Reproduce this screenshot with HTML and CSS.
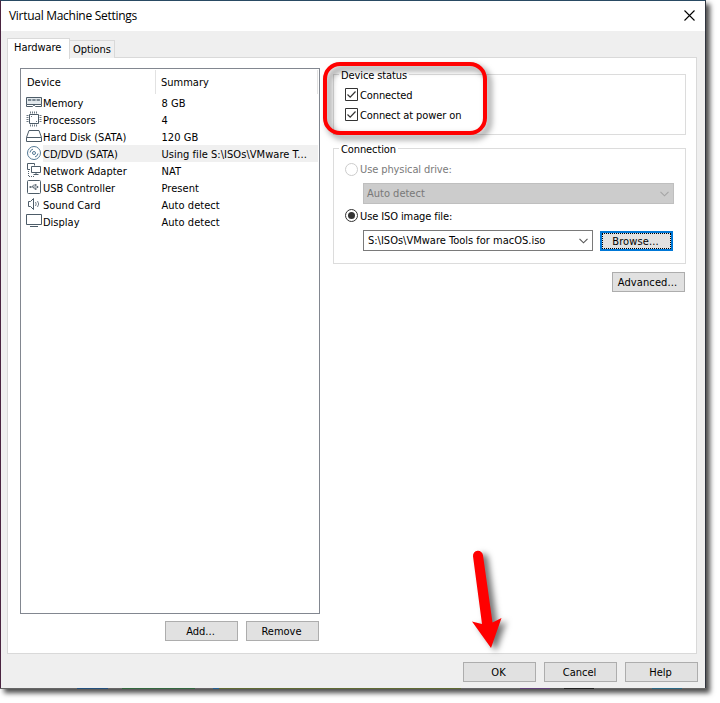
FILE: index.html
```html
<!DOCTYPE html>
<html lang="en">
<head>
<meta charset="utf-8">
<title>Virtual Machine Settings</title>
<link rel="stylesheet" href="styles.css">
</head>
<body>
<main class="window">
  <header class="titlebar">
    <h1>Virtual Machine Settings</h1>
    <svg class="close" width="11" height="11" viewBox="0 0 11 11"><path d="M.5 .5l10 10M10.5 .5l-10 10"/></svg>
  </header>
  <nav class="tabs"><span class="tab active">Hardware</span><span class="tab options">Options</span></nav>
  <section class="page">
    <div class="devices">
      <div class="list">
        <div class="head"><span>Device</span><span>Summary</span></div>
        <div class="row"><svg class="icon" viewBox="0 0 16 16"><path class="fill" d="M.5 3.500h15v7h-15z"/><path class="chips" d="M2 6h12" stroke-dasharray="3.300 1"/><path d="M.5 10.500v2h6l1-1h1l1 1h6v-2"/></svg><span>Memory</span><span>8 GB</span></div>
        <div class="row"><svg class="icon" viewBox="0 0 16 16"><path d="M3.500 3.500h9v9h-9z"/><path class="pins" d="M4.500 .5v2M6.500 .5v2M8.500 .5v2M10.500 .5v2M4.500 13.500v2M6.500 13.500v2M8.500 13.500v2M10.500 13.500v2M.5 4.500h2M.5 6.500h2M.5 8.500h2M.5 10.500h2M13.500 4.500h2M13.500 6.500h2M13.500 8.500h2M13.500 10.500h2M5 5.500h1M10 10.500h1"/></svg><span>Processors</span><span>4</span></div>
        <div class="row"><svg class="icon" viewBox="0 0 16 16"><path d="M.5 9.500l2.500-7h10l2.500 7v4h-15zM.5 9.500h15"/></svg><span>Hard Disk (SATA)</span><span>120 GB</span></div>
        <div class="row selected"><svg class="icon disc" viewBox="0 0 16 16"><circle cx="8" cy="8" r="6.500"/><circle cx="8" cy="8" r="1.500"/><path d="M4 7.500a4 4 0 0 1 3-3.400M12 8.500a4 4 0 0 1-3 3.400"/></svg><span>CD/DVD (SATA)</span><span>Using file S:\ISOs\VMware T...</span></div>
        <div class="row"><svg class="icon" viewBox="0 0 16 16"><path d="M4 7.500H1.500v-6h7v2M5.500 4.500h9v6h-9zM10 10.500v2M7.500 12.500h5"/><path d="M2.500 9v5M3 14.500h6" stroke-dasharray="1 1"/></svg><span>Network Adapter</span><span>NAT</span></div>
        <div class="row"><svg class="icon" viewBox="0 0 16 16"><rect x="1.500" y="1.500" width="13" height="13" rx="1"/><path d="M4 8h8M6 8l1.500-2h2M7 8l1.500 2h1" stroke-width=".8"/><path class="solid" d="M3.500 7.200h1.600v1.600H3.500zM9 5.200h1.500v1.500H9zM9 9.300h1.500v1.500H9zM11 6.800L12.700 8 11 9.200z"/></svg><span>USB Controller</span><span>Present</span></div>
        <div class="row"><svg class="icon" viewBox="0 0 16 16"><path d="M2.500 5.500h2l3-3v11l-3-3h-2z"/><path d="M9.500 6q1.400 2 0 4M11.500 5q2.400 3 0 6" stroke-width=".8"/></svg><span>Sound Card</span><span>Auto detect</span></div>
        <div class="row"><svg class="icon" viewBox="0 0 16 16"><path d="M.5 1.500h15v10H.5zM4 13.500h8"/></svg><span>Display</span><span>Auto detect</span></div>
      </div>
      <div class="actions"><button>Add...</button><button>Remove</button></div>
    </div>
    <div class="details">
      <section class="group status">
        <h2>Device status</h2>
        <label class="check"><svg width="13" height="13" viewBox="0 0 13 13"><path d="M.5 .5h12v12H.5z"/><path class="tick" d="M2.500 6.500l2.700 2.700 5.300-5.700"/></svg><span>Connected</span></label>
        <label class="check"><svg width="13" height="13" viewBox="0 0 13 13"><path d="M.5 .5h12v12H.5z"/><path class="tick" d="M2.500 6.500l2.700 2.700 5.300-5.700"/></svg><span>Connect at power on</span></label>
      </section>
      <section class="group connection">
        <h2>Connection</h2>
        <label class="radio off"><i></i><span>Use physical drive:</span></label>
        <div class="combo off"><span>Auto detect</span><svg width="9" height="6" viewBox="0 0 9 6"><path d="M.5 .8l4 4 4-4"/></svg></div>
        <label class="radio on"><i></i><span>Use ISO image file:</span></label>
        <div class="file"><div class="combo"><span>S:\ISOs\VMware Tools for macOS.iso</span><svg width="9" height="6" viewBox="0 0 9 6"><path d="M.5 .8l4 4 4-4"/></svg></div><button class="focus"><span>Browse...</span></button></div>
      </section>
      <button class="advanced">Advanced...</button>
    </div>
  </section>
  <footer class="footer"><button>OK</button><button>Cancel</button><button>Help</button></footer>
  <div class="backdrop-edge"></div>
</main>
<div class="callout"></div>
<svg class="arrow" width="50" height="115" viewBox="0 0 50 115"><path d="M8 16.300a5 5 0 0 1 10-1L27.500 82.500l9-4.500L26 108 7 81.500l10 2.500z"/></svg>
</body>
</html>
```
FILE: styles.css
```css
* { box-sizing: border-box; }
body {
  margin: 0;
  width: 720px;
  height: 703px;
  overflow: hidden;
  background: #fff;
  color: #000;
  font: 11px/17px "DejaVu Sans Condensed", "DejaVu Sans", sans-serif;
  font-stretch: condensed;
  white-space: nowrap;
}
h1, h2 { margin: 0; font: inherit; }
svg { fill: none; stroke: #333; flex: none; }
.window {
  width: 706px;
  height: 689px;
  display: flex;
  flex-direction: column;
  background: #efefef;
  border: 1px solid #294a63;
  border-bottom: 0;
  border-left-color: #4a2440;
  border-right-color: #30343e;
  box-shadow: 4px 4px 5px rgba(0,0,0,.7);
}
.titlebar {
  height: 30px;
  flex: none;
  display: flex;
  align-items: center;
  justify-content: space-between;
  padding: 0 10px 0 8px;
  background: #fff;
}
.titlebar h1 { font: 12px/16px "Open Sans", "Noto Sans", sans-serif; letter-spacing: -.29px; }
.close { stroke: #000; stroke-width: 1.1; position: relative; top: -1px; }
.tabs { display: flex; align-items: flex-end; height: 27px; padding-left: 6px; flex: none; z-index: 1; }
.tab { border: 1px solid #d9d9d9; border-bottom: 0; letter-spacing: -.05px; }
.active { width: 63px; height: 21px; margin-bottom: -1px; padding-left: 6px; line-height: 18px; background: #fff; }
.options { width: 45px; height: 18px; border-left: 0; padding-left: 3px; line-height: 17px; background: #f0f0f0; }
.page {
  width: 690px;
  height: 597px;
  flex: none;
  margin: -1px 0 0 6px;
  border: 1px solid #d9d9d9;
  background: #fff;
  display: flex;
  gap: 13px;
  padding: 10px 10px 0 12px;
}
.list { width: 300px; height: 546px; border: 1px solid #828790; padding: 1px 1px 0; }
.head { display: flex; height: 24px; line-height: 26px; }
.head span { padding-left: 5px; border-right: 1px solid #e2e2e2; }
.head span:first-child { width: 134px; }
.head span:last-child { width: 162px; }
.row { display: grid; grid-template-columns: 17px 118px 1fr; height: 17px; line-height: 19px; padding-left: 4px; }
.row span:last-child { padding-left: .5px; letter-spacing: .04px; }
.selected { background: linear-gradient(90deg, #fff 21px, #f0f0f0 21px); }
.icon { width: 16px; height: 16px; stroke: #4d5c68; }
.icon .fill { fill: #e3e9ed; }
.icon .chips { stroke-width: 2; stroke: #7b8892; }
.icon .pins { stroke: #6d7983; }
.icon .solid { fill: #4d5c68; stroke: none; }
.icon.disc { stroke: #557a96; }
button {
  width: 73px;
  height: 20px;
  padding: 0 2px 0 0;
  font: inherit;
  color: #000;
  border: 1px solid #adadad;
  border-radius: 0;
  background: #e1e1e1;
  line-height: 19px;
}
.actions { display: flex; gap: 8px; justify-content: flex-end; padding: 7px 1px 0 0; }
.details { width: 353px; display: flex; flex-direction: column; padding-top: 6px; }
.group { border: 1px solid #dcdcdc; display: flex; flex-direction: column; }
.group h2 { width: max-content; height: 17px; margin: -8px 0 0 5px; padding: 0 2px; background: #fff; letter-spacing: -.1px; }
.status { height: 61px; }
.connection { height: 116px; margin-top: 13px; }
.check, .radio { display: flex; align-items: center; gap: 2px; height: 17px; margin: 3px 0 0 11px; letter-spacing: -.1px; }
.check svg { position: relative; top: -1px; }
.tick { stroke-width: 1.2; }
.radio i { width: 13px; height: 13px; border: 1px solid #333; border-radius: 50%; padding: 2px; position: relative; top: -.5px; }
.radio.on i::before { content: ""; display: block; width: 7px; height: 7px; border-radius: 50%; background: #333; }
.radio.off { color: #7a7a7a; }
.radio.off i { border-color: #ccc; }
.radio.on span { padding-top: 1px; }
.combo { width: 230px; height: 21px; border: 1px solid #7a7a7a; padding: 0 4px; display: flex; align-items: center; justify-content: space-between; }
.combo svg { stroke: #555; stroke-width: 1.1; }
.combo.off { width: 311px; margin: 5px 0 0 29px; background: #ccc; border-color: #bfbfbf; color: #787878; padding-left: 3px; line-height: 19px; }
.combo.off svg { stroke: #a5a5a5; }
.file { display: flex; align-items: center; gap: 7px; margin: 6px 0 0 29px; }
.focus { border: 2px solid #0078d7; padding: 0; line-height: 15px; }
.focus span { display: block; height: 16px; border: 1px dotted #000; padding-right: 2px; letter-spacing: .12px; }
.advanced { align-self: flex-end; margin: 8px 1px 0 0; letter-spacing: .1px; }
.footer { display: flex; justify-content: flex-end; gap: 8px; padding: 8px 7px 0 0; height: 34px; flex: none; }
.backdrop-edge {
  height: 1px;
  margin: 0 -1px;
  background: linear-gradient(90deg, #666 77px, #24507d 77px 108px, #666 108px 122px, #33693e 122px 195px, #666 195px 213px, #246296 213px 219px, #606b32 219px 461px, #666 461px 520px, #614078 520px 550px, #555 550px 564px, #222 564px 594px, #666 594px 652px, #2b6985 652px 682px, #666 682px);
}
.callout {
  position: absolute;
  left: 323px;
  top: 62px;
  width: 164px;
  height: 73px;
  border: 4px solid #f00;
  border-radius: 17px;
  filter: drop-shadow(4px 4px 3px rgba(0,0,0,.5));
}
.arrow { position: absolute; left: 465px; top: 540px; overflow: visible; filter: drop-shadow(5px 3px 3px rgba(0,0,0,.55)); }
.arrow path { fill: #f00; stroke: none; }
```
